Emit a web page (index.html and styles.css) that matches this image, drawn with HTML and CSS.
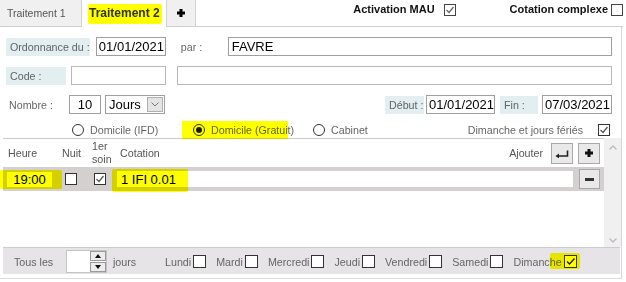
FILE: index.html
```html
<!DOCTYPE html>
<html lang="fr">
<head>
    <meta charset="UTF-8">
    <title>Traitement</title>
    <link rel="stylesheet" href="styles.css">
</head>
<body>
<section class="topbar">
    <div class="tab tab-off tab-first">Traitement 1</div>
    <div class="tab tab-on"><span class="mark mark-tab">Traitement 2</span></div>
    <div class="tab tab-off tab-add">
        <svg width="8" height="8" viewBox="0 0 8 8"><path d="M2.5 0h3v2.5h2.5v3h-2.5v2.5h-3v-2.5h-2.5v-3h2.5z" fill="#000"/></svg>
    </div>
    <div class="options">
        <span class="opt">Activation MAU</span>
        <span class="cb cb-top cb-mau"><svg width="10" height="10" viewBox="0 0 10 10"><polyline points="1.5,5 4,7.5 8.5,2" fill="none" stroke="#666" stroke-width="1.2"/></svg></span>
        <span class="opt opt-2">Cotation complexe</span>
        <span class="cb cb-top"></span>
    </div>
</section>

<section class="panel">
    <div class="row">
        <span class="lbl lbl-ord">Ordonnance du :</span>
        <input class="inp inp-date1" value="01/01/2021" readonly>
        <span class="txt txt-par">par :</span>
        <input class="inp inp-name" value="FAVRE" readonly>
    </div>

    <div class="row">
        <span class="lbl lbl-code">Code :</span>
        <input class="inp inp-light inp-code" value="" readonly>
        <input class="inp inp-light inp-code2" value="" readonly>
    </div>

    <div class="row">
        <span class="txt txt-nombre">Nombre :</span>
        <input class="inp inp-num" value="10" readonly>
        <div class="select">
            <span class="select-val">Jours</span>
            <span class="select-btn"><svg width="8" height="5" viewBox="0 0 8 5"><polyline points="0.5,0.5 4,4 7.5,0.5" fill="none" stroke="#777" stroke-width="1"/></svg></span>
        </div>
        <span class="lbl lbl-debut">Début :</span>
        <input class="inp inp-debut" value="01/01/2021" readonly>
        <span class="lbl lbl-fin">Fin :</span>
        <input class="inp inp-fin" value="07/03/2021" readonly>
    </div>

    <div class="radios">
        <span class="ro ro-1"><span class="radio"></span>Domicile (IFD)</span>
        <span class="ro ro-2 mark mark-radio"><span class="radio radio-on"></span>Domicile (Gratuit)</span>
        <span class="ro ro-3"><span class="radio"></span>Cabinet</span>
        <span class="feries">Dimanche et jours fériés
            <span class="cb cb-feries"><svg width="10" height="10" viewBox="0 0 10 10"><polyline points="1.5,5 4,7.5 8.5,2" fill="none" stroke="#555" stroke-width="1.2"/></svg></span>
        </span>
    </div>

    <div class="list">
        <div class="list-main">
            <div class="head">
                <span class="col-heure">Heure</span>
                <span class="col-nuit">Nuit</span>
                <span class="col-soin">1er<br>soin</span>
                <span class="col-cot">Cotation</span>
                <span class="ajouter">Ajouter</span>
                <span class="btn btn-enter">
                    <svg width="14" height="9" viewBox="0 0 14 9"><path d="M3 7H12.5V1.5" fill="none" stroke="#222" stroke-width="1.6"/><path d="M0.5 7L4 4.5V9.5z" fill="#222"/></svg>
                </span>
                <span class="btn btn-add">
                    <svg width="8" height="8" viewBox="0 0 8 8"><path d="M2.5 0h3v2.5h2.5v3h-2.5v2.5h-3v-2.5h-2.5v-3h2.5z" fill="#111"/></svg>
                </span>
            </div>
            <div class="line">
                <div class="field field-heure mark mark-heure">19:00</div>
                <span class="cb cb-nuit"></span>
                <span class="cb cb-soin"><svg width="10" height="10" viewBox="0 0 10 10"><polyline points="1.5,5 4,7.5 8.5,2" fill="none" stroke="#555" stroke-width="1.2"/></svg></span>
                <div class="field field-cot">1 IFI 0.01<span class="mark-cot"></span></div>
                <span class="btn btn-del"><span class="minus"></span></span>
            </div>
        </div>
        <div class="scroll">
            <svg width="8" height="5" viewBox="0 0 8 5"><polyline points="0.5,4.5 4,1 7.5,4.5" fill="none" stroke="#bbb" stroke-width="1.3"/></svg>
            <svg width="8" height="5" viewBox="0 0 8 5"><polyline points="0.5,0.5 4,4 7.5,0.5" fill="none" stroke="#bbb" stroke-width="1.3"/></svg>
        </div>
    </div>

    <div class="days">
        <span class="d-tous">Tous les</span>
        <span class="spin">
            <span class="spin-field"></span>
            <span class="spin-btns">
                <span class="sb"><svg width="6" height="4" viewBox="0 0 6 4"><path d="M0 4L3 0L6 4z" fill="#111"/></svg></span>
                <span class="sb"><svg width="6" height="4" viewBox="0 0 6 4"><path d="M0 0L3 4L6 0z" fill="#111"/></svg></span>
            </span>
        </span>
        <span class="d-jours">jours</span>
        <span class="day">Lundi<span class="cb cb-day"></span></span>
        <span class="day">Mardi<span class="cb cb-day"></span></span>
        <span class="day">Mercredi<span class="cb cb-day"></span></span>
        <span class="day">Jeudi<span class="cb cb-day"></span></span>
        <span class="day">Vendredi<span class="cb cb-day"></span></span>
        <span class="day">Samedi<span class="cb cb-day"></span></span>
        <span class="day">Dimanche<span class="cb cb-day mark mark-dim"><svg width="11" height="11" viewBox="0 0 11 11"><polyline points="2,5.5 4.5,8 9.5,2.5" fill="none" stroke="#222" stroke-width="1.4"/></svg></span></span>
    </div>
</section>
</body>
</html>
```

FILE: styles.css
```css
* {
    box-sizing: border-box;
}

body {
    margin: 0;
    width: 626px;
    height: 282px;
    overflow: hidden;
    background: #fff;
    font-family: "Liberation Sans", Arial, sans-serif;
    font-size: 10.7px;
    color: #666;
}

/* highlighter strokes */
.mark {
    position: relative;
}

.mark::after,
.mark-cot {
    content: "";
    position: absolute;
    background: #ffff00;
    mix-blend-mode: multiply;
    border-radius: 2px;
    pointer-events: none;
}

/* tabs */
.topbar {
    display: flex;
    width: 623px;
    height: 27px;
}

.tab {
    display: flex;
    align-items: center;
    height: 27px;
}

.tab-off {
    background: #f0f0f0;
    border-bottom: 1px solid #cfcfcf;
}

.tab-first {
    width: 82px;
    padding-left: 7px;
    border-right: 1px solid #d2d2d2;
    color: #555;
    font-size: 10.5px;
}

.tab-on {
    width: 84px;
    align-items: flex-start;
    padding: 6px 0 0 7px;
    font-size: 12px;
    font-weight: bold;
    color: #333;
}

.mark-tab::after {
    left: -1px;
    right: -2px;
    top: -2px;
    bottom: -4px;
}

.tab-add {
    width: 30px;
    justify-content: center;
    border-left: 1px solid #d2d2d2;
    border-right: 1px solid #d2d2d2;
}

.options {
    flex: 1;
    display: flex;
    justify-content: flex-end;
    align-items: flex-start;
    padding-top: 3px;
    border-bottom: 1px solid #cfcfcf;
}

.opt {
    font-size: 11px;
    font-weight: bold;
    color: #111;
    line-height: 13px;
    white-space: nowrap;
}

.opt-2 {
    margin-left: 54px;
    margin-right: 3px;
}

/* checkboxes and radios */
.cb {
    display: inline-flex;
    align-items: center;
    justify-content: center;
    flex-shrink: 0;
    width: 12px;
    height: 12px;
    background: #fff;
    border: 1px solid #333;
}

.cb-top {
    margin-top: 1px;
    border-color: #444;
}

.cb-mau {
    margin-left: 9px;
}

.radio {
    display: inline-flex;
    align-items: center;
    justify-content: center;
    flex-shrink: 0;
    width: 12px;
    height: 12px;
    margin-right: 6px;
    border: 1px solid #333;
    border-radius: 50%;
    background: #fff;
}

.radio-on::after {
    content: "";
    width: 6px;
    height: 6px;
    border-radius: 50%;
    background: #1a1a1a;
}

/* panel */
.panel {
    display: flex;
    flex-direction: column;
    width: 622px;
    height: 252px;
    border-right: 1px solid #d6d6d6;
    border-bottom: 1px solid #dcdcdc;
}

.row {
    display: flex;
    align-items: center;
    height: 19px;
    margin-top: 10px;
    padding: 0 9px 0 6px;
}

.lbl {
    display: flex;
    align-items: center;
    height: 18px;
    padding-left: 4px;
    background: #e3eef1;
    color: #5f6466;
    white-space: nowrap;
}

.lbl-ord {
    width: 84px;
}

.lbl-code {
    width: 60px;
}

.lbl-debut {
    width: 39px;
    margin-left: auto;
}

.lbl-fin {
    width: 38px;
    margin-left: 5px;
}

.txt-par {
    width: 47px;
    margin-left: 15px;
}

.txt-nombre {
    width: 60px;
    margin-left: 3px;
}

.inp {
    height: 19px;
    padding: 0 0 0 2px;
    border: 1px solid #9f9f9f;
    background: #fff;
    font-family: "Liberation Sans", Arial, sans-serif;
    font-size: 13px;
    color: #000;
    outline: none;
}

.inp-light {
    border-color: #b8b8b8;
}

.inp-date1 {
    width: 70px;
    margin-left: 6px;
}

.inp-name {
    width: 385px;
    padding-left: 3px;
}

.inp-code {
    width: 95px;
    margin-left: 5px;
}

.inp-code2 {
    width: 436px;
    margin-left: 11px;
}

.inp-num {
    width: 32px;
    padding: 0;
    text-align: center;
}

.inp-debut {
    width: 69px;
    margin-left: 2px;
}

.inp-fin {
    width: 70px;
    margin-left: 4px;
}

.select {
    display: flex;
    align-items: center;
    justify-content: space-between;
    width: 60px;
    height: 19px;
    margin-left: 4px;
    padding: 0 1px 0 3px;
    border: 1px solid #9f9f9f;
    font-size: 13px;
    color: #000;
}

.select-btn {
    display: flex;
    align-items: center;
    justify-content: center;
    width: 16px;
    height: 15px;
    background: #e4e4e4;
    border: 1px solid #b0b0b0;
}

/* radio line */
.radios {
    display: flex;
    align-items: center;
    height: 17px;
    margin-top: 7px;
    padding-right: 11px;
    white-space: nowrap;
}

.ro {
    display: flex;
    align-items: center;
}

.ro-1 {
    width: 110px;
    margin-left: 72px;
}

.ro-2 {
    width: 106px;
    height: 18px;
    padding-left: 11px;
}

.mark-radio::after {
    inset: 0;
    border-radius: 0;
}

.ro-3 {
    margin-left: 25px;
}

.feries {
    display: flex;
    align-items: center;
    margin-left: auto;
}

.cb-feries {
    margin-left: 15px;
}

/* list of soins */
.list {
    display: flex;
    height: 109px;
    margin-left: 3px;
}

.list-main {
    flex: 1;
    border-top: 1px solid #cccccc;
}

.head {
    display: flex;
    align-items: center;
    height: 28px;
    padding: 0 4px 0 5px;
    color: #555;
}

.col-heure {
    width: 54px;
}

.col-nuit {
    width: 30px;
}

.col-soin {
    width: 28px;
    line-height: 13px;
}

.ajouter {
    margin-left: auto;
}

.btn {
    display: flex;
    align-items: center;
    justify-content: center;
    width: 22px;
    height: 21px;
    background: #e9e9e9;
    border: 1px solid #a8a8a8;
}

.btn-enter {
    margin-left: 8px;
}

.btn-add {
    margin-left: 5px;
}

.line {
    display: flex;
    align-items: center;
    height: 24px;
    padding-right: 4px;
    background: #d4d0d0;
}

.field {
    display: flex;
    align-items: center;
    height: 15px;
    background: #fff;
    font-size: 13px;
    color: #000;
}

.field-heure {
    width: 45px;
    margin-left: 4px;
    justify-content: center;
}

.mark-heure::after {
    left: -7px;
    right: -10px;
    top: -2px;
    bottom: -2px;
}

.cb-nuit {
    margin-left: 13px;
}

.cb-soin {
    margin-left: 17px;
}

.field-cot {
    position: relative;
    width: 456px;
    height: 16px;
    margin-left: 11px;
    padding-left: 4px;
}

.mark-cot {
    left: -5px;
    width: 76px;
    top: -2px;
    bottom: -5px;
}

.btn-del {
    width: 21px;
    height: 20px;
    margin-left: 6px;
}

.minus {
    width: 9px;
    height: 3px;
    background: #333;
}

.scroll {
    display: flex;
    flex-direction: column;
    justify-content: space-between;
    align-items: center;
    width: 17px;
    padding: 7px 0 4px;
    background: #f0f0f0;
}

/* repeat bar */
.days {
    display: flex;
    align-items: center;
    width: 617px;
    height: 27px;
    margin-left: 3px;
    padding: 1px 0 0 11px;
    border-top: 1px solid #cccccc;
    background: #e6e4e6;
}

.d-tous {
    width: 52px;
}

.spin {
    display: flex;
    width: 41px;
    height: 23px;
    border: 1px solid #c4c4c4;
    background: #fff;
}

.spin-field {
    width: 24px;
}

.spin-btns {
    display: flex;
    flex-direction: column;
    justify-content: center;
    gap: 1px;
    width: 16px;
}

.sb {
    display: flex;
    align-items: center;
    justify-content: center;
    height: 10px;
    background: #ececec;
    border: 1px solid #9a9a9a;
}

.d-jours {
    width: 52px;
    margin-left: 6px;
}

.day {
    display: flex;
    align-items: center;
    margin-right: 10px;
}

.cb-day {
    width: 13px;
    height: 13px;
    margin-left: 2px;
}

.mark-dim::after {
    left: -15px;
    right: -4px;
    top: -3px;
    bottom: -2px;
}
```
